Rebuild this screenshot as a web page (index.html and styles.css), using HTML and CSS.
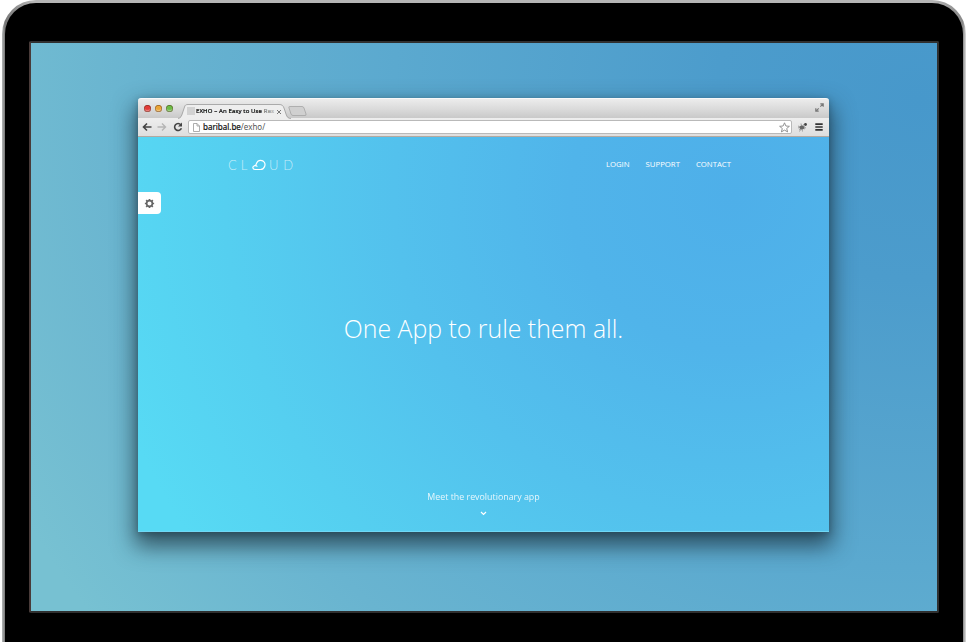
FILE: index.html
```html
<!DOCTYPE html>
<html lang="en">
<head>
<meta charset="utf-8">
<title>Cloud</title>
<link rel="stylesheet" href="styles.css">
</head>
<body>
<div class="laptop">
  <div class="bezel">
    <div class="screen">
      <div class="browser">
        <header class="chrome">
          <div class="tabbar">
            <div class="lights"><i class="red"></i><i class="yellow"></i><i class="green"></i></div>
            <div class="tab">
              <svg class="tab-shape" viewBox="0 0 114 15" preserveAspectRatio="none"><path d="M0 14.5C3 14 3.5 12 4.5 9L6.5 3C7 1 8 .5 10 .5H101C104 .5 105 1.500 106 4L108 10C109 13 110 14.500 113 14.500" fill="#eeeeee" stroke="#999" stroke-width=".8"/></svg>
              <span class="favicon"></span>
              <span class="tab-title">EXHO – An Easy to Use Res</span>
              <svg class="close" viewBox="0 0 6 6"><path d="M1 1l4 4M5 1L1 5" stroke="#777" stroke-width="1"/></svg>
            </div>
            <svg class="newtab" viewBox="0 0 20 10"><path d="M1.500 .5H14Q15.500 .5 16 2L18 8Q18.500 9.500 17 9.500H5Q3.500 9.500 3 8L1 2Q.5 .5 1.500 .5Z" fill="#d0d0d0" stroke="#a5a5a5" stroke-width=".8"/></svg>
            <svg class="expand" viewBox="0 0 9 9"><path d="M5.300 3.700l2.500-2.500M5.300.8H8.200V3.700M3.700 5.300L1.200 7.800M.8 5.300V8.200H3.700" fill="none" stroke="#777" stroke-width="1.200"/></svg>
          </div>
          <div class="toolbar">
            <svg class="nav" viewBox="0 0 10 10"><path d="M9.500 5H1.500M5 1.500L1.500 5 5 8.500" fill="none" stroke="#444" stroke-width="1.600"/></svg>
            <svg class="nav" viewBox="0 0 10 10"><path d="M.5 5H8.500M5 1.500L8.500 5 5 8.500" fill="none" stroke="#b5b5b5" stroke-width="1.400"/></svg>
            <svg class="nav" viewBox="0 0 10 10"><path d="M7.800 2.700A3.500 3.500 0 1 0 8.400 6.200" fill="none" stroke="#444" stroke-width="1.600"/><path d="M9 .5V4.500H5Z" fill="#444"/></svg>
            <div class="address">
              <svg class="page-icon" viewBox="0 0 7 9"><path d="M.5.5H4L6.500 3V8.500H.5ZM4 .5V3H6.500" fill="#fff" stroke="#999" stroke-width=".8"/></svg>
              <span class="url">baribal.be<span>/exho/</span></span>
              <svg class="star" viewBox="0 0 11 11"><path d="M5.500.8L6.900 4 10.400 4.300 7.700 6.500 8.600 9.900 5.500 8.100 2.400 9.900 3.300 6.500.6 4.300 4.100 4Z" fill="#fff" stroke="#888" stroke-width=".9"/></svg>
            </div>
            <svg class="bug" viewBox="0 0 11 11"><path d="M1 4l7 3M2 8l6-4M4 1.500l1.500 8M1 5.800H9M2.500 9.500L7 2" stroke="#999" stroke-width=".9"/><ellipse cx="4.900" cy="5.600" rx="2.300" ry="2" fill="#666"/><circle cx="8.500" cy="2.500" r="1.400" fill="#444"/></svg>
            <svg class="menu" viewBox="0 0 8 8"><path d="M.3 1.100H7.700M.3 4H7.700M.3 6.900H7.700" stroke="#333" stroke-width="1.600"/></svg>
          </div>
        </header>
        <main class="page">
          <div class="topline">
            <div class="logo">
              <span>C</span><span>L</span>
              <svg viewBox="0 0 14 12"><path d="M3 10.500C.4 10.500.2 7.500 2.300 6.800Q3.700 6.500 4.200 5.200C5 2.400 6.500 1.300 8.700 1.300C12 1.300 13.700 4.500 12.700 7.200Q11.600 10.500 8.500 10.500ZM3.200 6.600Q4.500 6.500 5 7.300" fill="none" stroke="#fff" stroke-width="1.200" stroke-linecap="round"/></svg>
              <span>U</span><span>D</span>
            </div>
            <nav class="links"><a>LOGIN</a><a>SUPPORT</a><a>CONTACT</a></nav>
          </div>
          <div class="settings">
            <svg viewBox="0 0 10 10"><circle cx="5" cy="5" r="2.600" fill="none" stroke="#666" stroke-width="1.500"/><path d="M5 .8V2M5 8V9.200M.8 5H2M8 5H9.200M2 2L2.900 2.900M7.100 7.100L8 8M2 8L2.900 7.100M7.100 2.900L8 2" stroke="#666" stroke-width="1.500"/></svg>
          </div>
          <h1>One App to rule them all.</h1>
          <div class="meet">
            <p>Meet the revolutionary app</p>
            <svg viewBox="0 0 7 5"><path d="M1 1L3.500 3.500 6 1" fill="none" stroke="#fff" stroke-width="1.200"/></svg>
          </div>
        </main>
      </div>
    </div>
  </div>
</div>
</body>
</html>
```
FILE: styles.css
```css
* { box-sizing: border-box; }
html, body { margin: 0; height: 642px; overflow: hidden; background: #fff; }
svg { display: block; flex: none; }
.laptop {
  width: 964px; height: 642px; margin-left: 2px; padding: 3px 3px 0;
  border-radius: 34px 34px 0 0;
  background: linear-gradient(90deg, #b5b8b8 0, #777 3px, #b5b5b5 30px, #b5b5b5 930px, #888 961px, #ddd 964px);
}
.bezel {
  height: 639px; padding: 38px 24px 0; border-radius: 31px 31px 0 0; background: #000;
}
.screen {
  width: 910px; height: 572px; border: 2px solid #303030; border-left-color: #493b39; border-radius: 2px;
  background: radial-gradient(ellipse 1010px 900px at 98% 10%, #4798cb 0, #4c9ccc 20%, #5ba9cf 52%, #69b4d0 78%, #77c1d2 100%);
  padding: 55px 0 0 107px;
}
.browser {
  width: 691px; height: 434px; border-radius: 3px 3px 0 0;
  box-shadow: 0 11px 22px 3px rgba(25,45,55,.72), 0 2px 6px rgba(25,45,55,.35);
}
.chrome { height: 39px; }
.tabbar {
  display: flex; height: 20px; padding: 0 5px 0 6px; border-radius: 3px 3px 0 0;
  background: linear-gradient(#ececec, #d8d8d8 60%, #c9c9c9); border-top: 1px solid #f8f8f8;
}
.lights { display: flex; gap: 4px; padding-top: 6px; width: 35px; }
.lights i { width: 7px; height: 7px; border-radius: 50%; box-shadow: inset 0 0 0 .7px rgba(70,30,10,.5), inset 0 -2px 1px rgba(255,255,255,.35); }
.red { background: #e23b38; }
.yellow { background: #eba536; }
.green { background: #6bbc45; }
.tab { display: flex; position: relative; width: 109px; height: 15px; margin-top: 5px; padding: 3px 0 0 8px; align-items: flex-start; }
.tab-shape { position: absolute; left: -1px; top: 0; width: 114px; height: 15px; }
.favicon { position: relative; width: 8px; height: 8px; background: #d2d2d2; margin-right: 1px; }
.tab-title {
  position: relative; width: 79px; overflow: hidden; white-space: nowrap; font: 6px/9px "Noto Sans", sans-serif;
  color: transparent; background: linear-gradient(90deg, #111 65px, #888 68px, #ddd 79px); -webkit-background-clip: text; background-clip: text;
  -webkit-text-stroke: .2px rgba(20,20,20,.35); letter-spacing: .13px;
}
.close { position: relative; width: 6px; height: 6px; margin: 2px 0 0 1px; }
.newtab { width: 20px; height: 10px; margin: 7px 0 0; }
.expand { width: 9px; height: 9px; margin: 4px 0 0 auto; }
.toolbar {
  display: flex; align-items: center; height: 19px; padding: 0 5px 0 4px;
  background: linear-gradient(#eee, #dedede); border-bottom: 1px solid #b3a9a0;
}
.nav { width: 10px; height: 10px; margin-right: 5px; }
.nav:nth-child(3) { margin: 0 5px 0 1px; }
.address { display: flex; align-items: center; flex: 1; height: 14px; padding: 0 1px 0 4px; border: 1px solid #b9b9b9; border-radius: 2px; background: #fff; }
.page-icon { width: 7px; height: 9px; }
.url { font: 8px/12px "Noto Sans", sans-serif; color: #111; margin-left: 3px; -webkit-text-stroke: .2px #111; white-space: nowrap; }
.url span { color: #555; -webkit-text-stroke: 0; }
.star { width: 11px; height: 11px; margin-left: auto; }
.bug { width: 11px; height: 11px; margin-left: 5px; }
.menu { width: 8px; height: 8px; margin: 0 1px 0 7px; }
.page {
  display: flex; flex-direction: column; height: 395px; color: #fff; font-family: "Open Sans", sans-serif;
  background: radial-gradient(ellipse 650px 620px at 86% 15%, #4eafe9 0, #50b4ea 25%, #53c1ed 52%, #55cff0 78%, #57daf4 100%);
  border-bottom: 1px solid #70d8f5;
}
.topline { display: flex; justify-content: space-between; padding: 20px 98px 0 90px; height: 55px; }
.logo { display: flex; align-items: flex-start; width: 68px; height: 15px; padding-top: 1px; font: 300 13px/15px Lato, sans-serif; color: rgba(255,255,255,.65); }
.logo span { width: 13px; }
.logo span:nth-child(2) { width: 11.500px; }
.logo span:nth-child(4) { margin-left: 3px; width: 14.500px; }
.logo svg { width: 14px; height: 12px; margin-top: 1px; }
.links { display: flex; gap: 16px; font-size: 7.750px; line-height: 14px; }
.settings { display: flex; align-items: center; width: 23px; height: 22px; padding-left: 6px; background: #fff; border-radius: 0 4px 4px 0; }
.settings svg { width: 11px; height: 11px; }
h1 { margin: 94px 0 1px; text-align: center; font-size: 24.850px; line-height: 40px; font-weight: 300; }
.meet { display: flex; flex-direction: column; align-items: center; margin-top: 141px; }
.meet p { margin: 0; font-size: 8.850px; line-height: 14px; opacity: .85; }
.meet svg { width: 7px; height: 5px; margin-top: 7px; }
```
